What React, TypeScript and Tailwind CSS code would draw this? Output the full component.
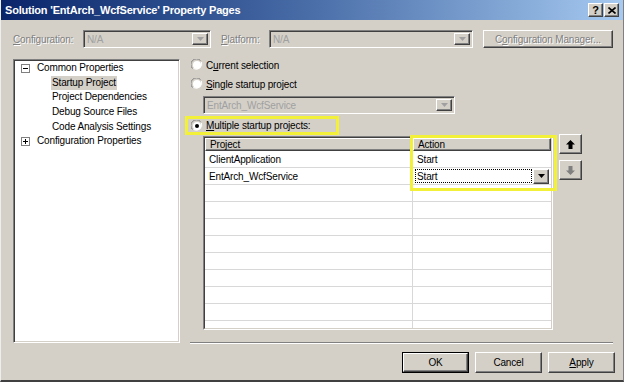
import React from 'react';

const raised =
  'border border-t-white border-l-white border-r-[#404040] border-b-[#404040] shadow-[inset_-1px_-1px_0_#808080]';
const sunken =
  'border border-t-[#808080] border-l-[#808080] border-r-white border-b-white shadow-[inset_1px_1px_0_#404040,inset_-1px_-1px_0_#d4d0c8]';
const disabledText = 'text-[#808080] [text-shadow:1px_1px_0_#fff]';

const Arrow: React.FC<{ color?: string }> = ({ color = '#000' }) => (
  <svg width="7" height="4" viewBox="0 0 7 4">
    <path d="M0 0h7L3.5 4z" fill={color} />
  </svg>
);

const DropButton: React.FC<{ disabled?: boolean }> = ({ disabled }) => (
  <div className={`w-[16px] h-full flex items-center justify-center bg-[#d4d0c8] ${raised}`}>
    <Arrow color={disabled ? '#a0a0a0' : '#000'} />
  </div>
);

const Combo: React.FC<{ width: string; text: string; disabled?: boolean }> = ({ width, text, disabled }) => (
  <div className={`${width} h-[18px] flex bg-[#d4d0c8] ${sunken} p-[2px]`}>
    <div className={`flex-1 flex items-center pl-[1px] ${disabled ? 'text-[#a0a0a0]' : ''}`}>{text}</div>
    <DropButton disabled={disabled} />
  </div>
);

const Radio: React.FC<{ checked?: boolean }> = ({ checked }) => (
  <svg width="12" height="12" viewBox="0 0 12 12">
    <circle cx="6" cy="6" r="5.5" fill="#d4d0c8" />
    <path d="M1.5 9.5A5.5 5.5 0 0 1 9.5 1.5" stroke="#808080" strokeWidth="1" fill="none" />
    <path d="M2.5 9.5A5.5 5.5 0 0 0 10.5 3" stroke="#fff" strokeWidth="1" fill="none" />
    <circle cx="6" cy="6" r="4" fill="#fff" />
    {checked && <circle cx="6" cy="6" r="2" fill="#000" />}
  </svg>
);

const ExpandBox: React.FC<{ open?: boolean }> = ({ open }) => (
  <svg width="9" height="9" viewBox="0 0 9 9">
    <rect x="0.5" y="0.5" width="8" height="8" fill="#fff" stroke="#808080" />
    <path d="M2 4.5h5" stroke="#000" />
    {!open && <path d="M4.5 2v5" stroke="#000" />}
  </svg>
);

const UpDownArrow: React.FC<{ up?: boolean; color: string }> = ({ up, color }) => (
  <svg width="9" height="9" viewBox="0 0 9 9">
    {up ? (
      <path d="M4.5 0L9 4.5H6.5V9h-4V4.5H0z" fill={color} />
    ) : (
      <path d="M4.5 9L9 4.5H6.5V0h-4v4.5H0z" fill={color} />
    )}
  </svg>
);

const Button: React.FC<{ children: React.ReactNode; isDefault?: boolean }> = ({ children, isDefault }) => (
  <div className={`w-[67px] h-[21px] ${isDefault ? 'border border-black' : ''}`}>
    <div className={`w-full h-full flex items-center justify-center bg-[#d4d0c8] ${raised}`}>{children}</div>
  </div>
);

const treeItems = [
  { label: 'Common Properties', level: 0, box: 'open' },
  { label: 'Startup Project', level: 1, selected: true },
  { label: 'Project Dependencies', level: 1 },
  { label: 'Debug Source Files', level: 1 },
  { label: 'Code Analysis Settings', level: 1 },
  { label: 'Configuration Properties', level: 0, box: 'closed' },
];

const emptyRows = Array.from({ length: 9 });

const App: React.FC = () => {
  return (
    <div className="w-[624px] h-[382px] bg-[#d4d0c8] flex flex-col text-[10px] tracking-[-0.15px] text-black [font-family:'Liberation_Sans',Arial,sans-serif] border-l border-l-[#eee] border-b-2 border-b-[#404040] border-r border-r-[#808080] overflow-hidden">
      {/* Title bar */}
      <div className="h-[20px] shrink-0 flex items-center justify-between pl-[4px] pr-[4px] bg-linear-to-r from-[#0a246a] via-[#4a6ea8] to-[#a6caf0]">
        <span className="text-white font-bold text-[11px] tracking-[-0.2px]">Solution 'EntArch_WcfService' Property Pages</span>
        <div className="flex gap-[1px]">
          <div className={`w-[15px] h-[14px] flex items-center justify-center bg-[#d4d0c8] font-bold text-[11px] leading-none ${raised}`}>?</div>
          <div className={`w-[15px] h-[14px] flex items-center justify-center bg-[#d4d0c8] ${raised}`}>
            <svg width="8" height="7" viewBox="0 0 8 7">
              <path d="M0.5 0.5l7 6M7.5 0.5l-7 6" stroke="#000" strokeWidth="1.6" />
            </svg>
          </div>
        </div>
      </div>

      {/* Configuration row */}
      <div className="mt-[10px] h-[18px] flex items-center pl-[12px]">
        <span className={`w-[70px] ${disabledText}`}>
          <span className="underline">C</span>onfiguration:
        </span>
        <Combo width="w-[128px]" text="N/A" disabled />
        <span className={`ml-[10px] w-[48px] ${disabledText}`}>
          <span className="underline">P</span>latform:
        </span>
        <Combo width="w-[204px]" text="N/A" disabled />
        <div className={`ml-[10px] w-[130px] h-[18px] flex items-center justify-center bg-[#d4d0c8] ${raised} ${disabledText}`}>
          <span>
            C<span className="underline">o</span>nfiguration Manager...
          </span>
        </div>
      </div>

      {/* Main area */}
      <div className="mt-[10px] flex flex-1">
        {/* Tree */}
        <div className={`ml-[12px] mt-[1px] w-[167px] h-[284px] bg-white ${sunken} pt-[1px]`}>
          {treeItems.map((item) => (
            <div key={item.label} className="h-[14.6px] flex items-center">
              {item.level === 0 ? (
                <div className="w-[22px] flex justify-end pr-[6px]">
                  <ExpandBox open={item.box === 'open'} />
                </div>
              ) : (
                <div className="w-[37px]" />
              )}
              <span className={`px-[1px] leading-[14px] ${item.selected ? 'bg-[#d4d0c8]' : ''}`}>{item.label}</span>
            </div>
          ))}
        </div>

        {/* Right panel */}
        <div className="ml-[3px] w-[433px] flex flex-col">
          <div className="h-[14px] flex items-center pl-[8px] gap-[3px]">
            <Radio />
            <span>
              C<span className="underline">u</span>rrent selection
            </span>
          </div>
          <div className="mt-[5px] h-[14px] flex items-center pl-[8px] gap-[3px]">
            <Radio />
            <span>
              <span className="underline">S</span>ingle startup project
            </span>
          </div>
          <div className="mt-[5px] ml-[20px]">
            <Combo width="w-[252px]" text="EntArch_WcfService" disabled />
          </div>
          <div className="mt-[2px] ml-[2px] w-[154px] h-[19px] border-[3px] border-[#f3f03a] flex items-center pl-[3px] gap-[3px]">
            <Radio checked />
            <span>
              <span className="underline">M</span>ultiple startup projects:
            </span>
          </div>

          {/* Grid + move buttons */}
          <div className="mt-[1px] flex">
            <div className="relative ml-[20px] w-[350px] h-[194px]">
              <div className="w-full h-full border border-t-[#808080] border-l-[#808080] border-r-white border-b-white">
                <div className="w-full h-full border border-t-[#404040] border-l-[#404040] border-r-[#d4d0c8] border-b-[#d4d0c8] bg-white overflow-hidden">
                  <div className="h-[13px] flex bg-[#d4d0c8]">
                    <div className={`w-[208px] flex items-center pl-[4px] ${raised}`}>Project</div>
                    <div className={`flex-1 flex items-center pl-[4px] ${raised}`}>Action</div>
                  </div>
                  <div className="h-[17px] flex border-b border-[#d8d8d8]">
                    <div className="w-[208px] flex items-center pl-[4px] border-r border-[#d8d8d8]">ClientApplication</div>
                    <div className="flex-1 flex items-center pl-[4px]">Start</div>
                  </div>
                  <div className="h-[17px] flex border-b border-[#d8d8d8]">
                    <div className="w-[208px] flex items-center pl-[4px] border-r border-[#d8d8d8]">EntArch_WcfService</div>
                    <div className="flex-1 flex items-center pl-[2px] pr-[2px] gap-[1px]">
                      <div className="w-[117px] h-[14px] flex items-center pl-[1px] border border-dotted border-black">Start</div>
                      <div className="h-[15px]">
                        <DropButton />
                      </div>
                    </div>
                  </div>
                  {emptyRows.map((_, i) => (
                    <div key={i} className="h-[17px] flex border-b border-[#d8d8d8]">
                      <div className="w-[208px] border-r border-[#d8d8d8]" />
                      <div className="flex-1" />
                    </div>
                  ))}
                </div>
              </div>
              {/* highlight around Action column */}
              <div className="absolute left-[207px] top-[-1px] w-[147px] h-[56px] border-[3px] border-[#f3f03a]" />
            </div>
            <div className="ml-[6px] -mt-[2px] flex flex-col gap-[6px]">
              <div className={`w-[23px] h-[20px] flex items-center justify-center bg-[#d4d0c8] ${raised}`}>
                <UpDownArrow up color="#000" />
              </div>
              <div className={`w-[23px] h-[20px] flex items-center justify-center bg-[#d4d0c8] ${raised}`}>
                <UpDownArrow color="#808080" />
              </div>
            </div>
          </div>

          <div className="mt-[12px] ml-[7px] w-[423px] border-t border-t-[#808080] border-b border-b-white" />
        </div>
      </div>

      {/* Buttons */}
      <div className="h-[21px] mb-[7px] flex justify-end gap-[6px] pr-[8px]">
        <Button isDefault>OK</Button>
        <Button>Cancel</Button>
        <Button>
          <span>
            <span className="underline">A</span>pply
          </span>
        </Button>
      </div>
    </div>
  );
};

export default App;
